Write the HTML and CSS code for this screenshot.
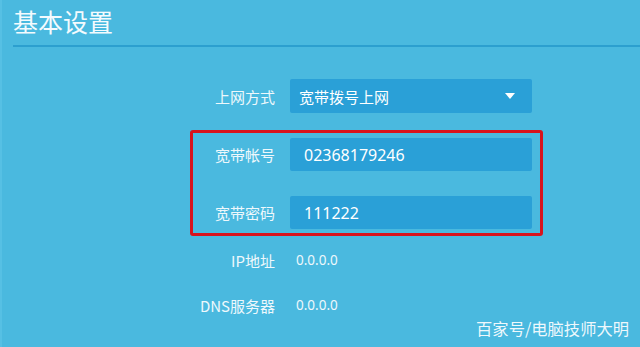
FILE: index.html
```html
<!DOCTYPE html>
<html lang="zh">
<head>
<meta charset="utf-8">
<link rel="stylesheet" href="styles.css">
</head>
<body>
<div class="page">
  <div class="header">
    <h1 class="title">基本设置</h1>
  </div>
  <div class="form">
    <div class="row">
      <div class="label">上网方式</div>
      <div class="field select">
        <span>宽带拨号上网</span>
        <span class="caret"></span>
      </div>
    </div>
    <div class="highlight">
      <div class="row row-in">
        <div class="label label-in">宽带帐号</div>
        <div class="field input">02368179246</div>
      </div>
      <div class="row row-in row-second">
        <div class="label label-in">宽带密码</div>
        <div class="field input">111222</div>
      </div>
    </div>
    <div class="row info first-info">
      <div class="label">IP地址</div>
      <div class="value">0.0.0.0</div>
    </div>
    <div class="row info">
      <div class="label">DNS服务器</div>
      <div class="value">0.0.0.0</div>
    </div>
  </div>
  <div class="watermark">百家号/电脑技师大明</div>
</div>
</body>
</html>
```
FILE: styles.css
```css
html, body {
  margin: 0;
  padding: 0;
}
body {
  width: 640px;
  height: 347px;
  overflow: hidden;
  background: #4ab9df;
  font-family: "Microsoft YaHei", "Noto Sans CJK SC", "Noto Sans", sans-serif;
  color: #ffffff;
}
.page {
  position: relative;
  width: 640px;
  height: 347px;
  border-left: 2px solid #56c0e4;
  box-sizing: border-box;
}
.header {
  margin-left: 11px;
  height: 45px;
  border-bottom: 2px solid #2c9fcf;
}
.title {
  margin: 0;
  font-weight: normal;
  font-size: 25px;
  line-height: 43px;
  color: #f4fbfe;
}
.form {
  display: flex;
  flex-direction: column;
  padding-top: 32px;
}
.row {
  display: flex;
  align-items: center;
  gap: 15px;
}
.label {
  width: 273px;
  text-align: right;
  font-size: 15px;
  color: #eef8fc;
}
.field {
  width: 242px;
  height: 33px;
  box-sizing: border-box;
  background: #2aa0d7;
  border-radius: 2px;
  display: flex;
  align-items: center;
  font-size: 15px;
}
.select {
  height: 34px;
  padding: 0 17px 0 9px;
  justify-content: space-between;
}
.caret {
  width: 0;
  height: 0;
  border-left: 5px solid transparent;
  border-right: 5px solid transparent;
  border-top: 6px solid #ffffff;
}
.input {
  padding-left: 14px;
  font-size: 16px;
  font-family: "Microsoft YaHei", "Noto Sans", "Noto Sans CJK SC", sans-serif;
}
.highlight {
  margin-top: 17px;
  margin-left: 188px;
  width: 353px;
  box-sizing: border-box;
  border: 3px solid #d8131c;
  border-radius: 3px;
  padding: 5px 0 4px;
}
.label-in {
  width: 82px;
}
.row-second {
  margin-top: 25px;
}
.info {
  height: 30px;
}
.first-info {
  margin-top: 9px;
}
.info + .info {
  margin-top: 15px;
}
.value {
  padding-left: 6px;
  font-size: 13.5px;
  color: #eef8fc;
  font-family: "Microsoft YaHei", "Noto Sans", "Noto Sans CJK SC", sans-serif;
}
.watermark {
  position: absolute;
  right: 11px;
  bottom: 7px;
  font-size: 16.3px;
  color: rgba(255, 255, 255, 0.92);
}
```
